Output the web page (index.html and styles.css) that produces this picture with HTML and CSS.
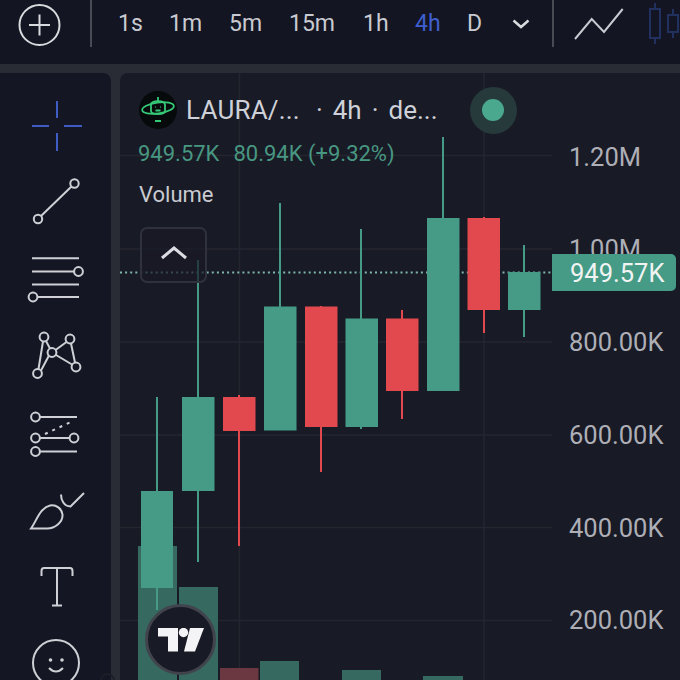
FILE: index.html
```html
<!DOCTYPE html>
<html lang="en">
<head>
    <meta charset="UTF-8">
    <meta name="viewport" content="width=device-width, initial-scale=1.0">
    <title>LAURA chart</title>
    <link rel="stylesheet" href="styles.css">
</head>
<body>
    <div class="app">
        <!-- Top toolbar -->
        <header class="topbar">
            <svg class="add-icon" width="90" height="50" viewBox="0 0 90 50">
                <circle cx="39.5" cy="25" r="20"/>
                <path d="M29 25H50M39.5 14.5V35.5"/>
            </svg>
            <div class="divider"></div>
            <nav class="intervals">
                <span class="interval w-1s">1s</span>
                <span class="interval w-1m">1m</span>
                <span class="interval w-5m">5m</span>
                <span class="interval w-15m">15m</span>
                <span class="interval w-1h">1h</span>
                <span class="interval w-4h active">4h</span>
                <span class="interval w-d">D</span>
                <svg class="chevron-down" width="18" height="10" viewBox="0 0 18 10"><path d="M1.5 1.5L9 8L16.5 1.5"/></svg>
            </nav>
            <div class="divider"></div>
            <svg class="chart-type" width="127" height="50" viewBox="553 0 127 50">
                <path class="line-type" d="M575 39L591.7 19L604 32L622.7 9"/>
                <path class="candle-type" d="M650 9H660V38H650ZM655 3V9M655 38V44M668 15H678V32H668ZM673 9V15M673 32V38"/>
            </svg>
        </header>

        <div class="main">
            <!-- Drawing tools -->
            <aside class="sidebar">
                <svg class="tool crosshair" viewBox="0 88 111 76">
                    <path d="M57 101V118M57 133V151M32 126H49M64 126H82"/>
                </svg>
                <svg class="tool" viewBox="0 164 111 76">
                    <circle cx="74.5" cy="183.5" r="4.2"/>
                    <circle cx="38" cy="219" r="4.2"/>
                    <path d="M71.5 186.5L41 216"/>
                </svg>
                <svg class="tool" viewBox="0 240 111 76">
                    <path d="M32 258.3H79M32 271.5H74M32 284.5H79M37.5 297H79"/>
                    <circle cx="78.5" cy="271.5" r="4.4"/>
                    <circle cx="33" cy="297" r="4.4"/>
                </svg>
                <svg class="tool" viewBox="0 316 111 76">
                    <path d="M43 341.5L38.5 369M46 341L50 348.5M41 370.5L49 355.5M55.5 350L66.5 342M56 355L72 364.5M71 343.5L75 362.5"/>
                    <circle cx="44" cy="337" r="4.4"/>
                    <circle cx="70" cy="339" r="4.4"/>
                    <circle cx="52" cy="352.5" r="4.4"/>
                    <circle cx="76" cy="367" r="4.4"/>
                    <circle cx="37.5" cy="373.5" r="4.4"/>
                </svg>
                <svg class="tool" viewBox="0 392 111 76">
                    <path d="M40 417H77M40 438H69.500M40 451.500H77"/>
                    <path class="dots" d="M45 434L74 420.500"/>
                    <circle cx="35.500" cy="417" r="4.400"/>
                    <circle cx="35.500" cy="438" r="4.400"/>
                    <circle cx="74" cy="438" r="4.400"/>
                    <circle cx="35.500" cy="451.500" r="4.400"/>
                </svg>
                <svg class="tool" viewBox="0 468 111 76">
                    <path d="M31 528.500C37 520 40 508 50 505.500C56 504 62 509 62.500 514.500C63 522 55 529 46 528.500Z"/>
                    <path d="M61 494.500C61 500 64 506.500 70.500 506.500L84 493"/>
                </svg>
                <svg class="tool" viewBox="0 544 111 76">
                    <path d="M41.500 576V571C41.500 569 42.500 568 44 568H70C71.500 568 72.500 569 72.500 571V576M57 568V605M52 605.500H62"/>
                </svg>
                <svg class="tool" viewBox="0 620 111 76">
                    <circle cx="56" cy="663" r="23"/>
                    <path d="M49 668Q56 675 63 668"/>
                    <circle class="eye" cx="50.500" cy="660" r="1.800"/>
                    <circle class="eye" cx="62" cy="660" r="1.800"/>
                </svg>
            </aside>

            <section class="chart">
                <!-- Grid, candles and volume, drawn in page coordinates -->
                <svg class="plot" width="560" height="607" viewBox="120 73 560 607">
                    <g class="grid">
                        <path d="M120 155.500H552M120 249H552M120 342H552M120 435H552M120 527.500H552M120 620.500H552"/>
                        <path d="M239.500 73V680M484 73V680"/>
                    </g>
                    <g class="vol-up">
                        <rect x="138" y="546" width="39" height="134"/>
                        <rect x="179" y="587" width="39" height="93"/>
                        <rect x="260" y="661" width="39" height="19"/>
                        <rect x="342" y="670" width="39" height="10"/>
                        <rect x="423" y="676" width="40" height="4"/>
                    </g>
                    <g class="vol-down">
                        <rect x="220" y="668" width="38.500" height="12"/>
                    </g>
                    <path class="last-line" d="M120 272.500H552"/>
                    <g class="up">
                        <path d="M157 397V610M198 260V562M280 203V307M361 229V429M443 137V218M524 245V337"/>
                        <rect x="141" y="491" width="32" height="97"/>
                        <rect x="182" y="397" width="32.500" height="94"/>
                        <rect x="264" y="306.500" width="32.500" height="124"/>
                        <rect x="345.500" y="318.500" width="32.500" height="108.500"/>
                        <rect x="427" y="218" width="32.500" height="173"/>
                        <rect x="508" y="272" width="32.500" height="38"/>
                    </g>
                    <g class="down">
                        <path d="M239 395V546M321 306V472M402 310V419M484 217V333"/>
                        <rect x="223" y="397" width="32.500" height="34"/>
                        <rect x="305" y="306.500" width="32.500" height="120.500"/>
                        <rect x="386" y="318.500" width="32.500" height="72.500"/>
                        <rect x="467.500" y="218" width="32.500" height="92"/>
                    </g>
                </svg>

                <div class="legend">
                    <div class="title-row">
                        <svg class="coin" width="38" height="38" viewBox="0 0 38 38">
                            <circle class="coin-bg" cx="19" cy="19" r="19"/>
                            <g class="coin-art">
                                <ellipse cx="19" cy="17" rx="16" ry="5.500" transform="rotate(-8 19 17)"/>
                                <path d="M12 14C12 9 26 9 26 14V20C26 24 12 24 12 20Z"/>
                                <path d="M19 10V6M16 30H22"/>
                                <path d="M16 16H16.500M21.500 16H22M16.500 19.500H21.500"/>
                            </g>
                        </svg>
                        <span class="symbol">LAURA/...</span>
                        <span>·</span>
                        <span>4h</span>
                        <span>·</span>
                        <span>de...</span>
                        <div class="status"><div class="status-dot"></div></div>
                    </div>
                    <div class="values">
                        <span>949.57K</span>
                        <span>80.94K (+9.32%)</span>
                    </div>
                    <div class="study">Volume</div>
                    <div class="collapse">
                        <svg width="28" height="14" viewBox="0 0 28 14"><path d="M2 12L14 2L26 12"/></svg>
                    </div>
                </div>

                <div class="axis">
                    <span>1.20M</span>
                    <span>1.00M</span>
                    <span>800.00K</span>
                    <span>600.00K</span>
                    <span>400.00K</span>
                    <span>200.00K</span>
                </div>
                <div class="last-price">949.57K</div>

                <div class="tv-badge">
                    <svg width="46" height="24" viewBox="0 0 46 24">
                        <path d="M0 0H20V23.500H10V8.500H0Z"/>
                        <circle cx="25.500" cy="4.500" r="4.700"/>
                        <path d="M32 0H46L37 23.500H26Z"/>
                    </svg>
                </div>
            </section>
        </div>
        <div class="corner-ring"></div>
    </div>
</body>
</html>
```

FILE: styles.css
```css
* {
    box-sizing: border-box;
}

body {
    margin: 0;
    background: #2a2c35;
    font-family: Roboto, "Liberation Sans", sans-serif;
    overflow: hidden;
}

.app {
    position: relative;
    width: 680px;
    height: 680px;
    display: flex;
    flex-direction: column;
    overflow: hidden;
    background: #2a2c35;
}

/* Top toolbar */
.topbar {
    display: flex;
    align-items: flex-start;
    height: 64px;
    flex-shrink: 0;
    background: #131522;
    margin-bottom: 9px;
}

.add-icon {
    flex-shrink: 0;
}

.add-icon circle,
.add-icon path {
    fill: none;
    stroke: #d9dade;
    stroke-width: 2;
}

.divider {
    width: 2px;
    height: 47px;
    flex-shrink: 0;
    background: #484a54;
}

.intervals {
    display: flex;
    align-items: center;
    height: 47px;
    width: 460px;
    padding-left: 26px;
    font-size: 23px;
    color: #c9cad1;
}

.interval {
    flex-shrink: 0;
}

.w-1s { width: 51px; }
.w-1m { width: 60px; }
.w-5m { width: 60px; }
.w-15m { width: 74px; }
.w-1h { width: 52px; }
.w-4h { width: 52px; }
.w-d { width: 45px; }

.interval.active {
    color: #3f5fd0;
}

.chevron-down path {
    fill: none;
    stroke: #d9dade;
    stroke-width: 2.500;
}

.chart-type {
    flex-shrink: 0;
    margin-left: -1px;
}

.line-type {
    fill: none;
    stroke: #c9cad1;
    stroke-width: 2;
}

.candle-type {
    fill: none;
    stroke: #22305f;
    stroke-width: 2;
}

.main {
    flex: 1;
    display: flex;
    gap: 9px;
    min-height: 0;
}

/* Left tools */
.sidebar {
    width: 111px;
    flex-shrink: 0;
    padding-top: 15px;
    background: #141723;
    border-radius: 0 8px 0 0;
}

.tool {
    display: block;
    width: 111px;
    height: 76px;
    overflow: visible;
    fill: none;
    stroke: #cfd0d6;
    stroke-width: 2;
}

.tool .dots {
    stroke-dasharray: 3 5;
}

.tool .eye {
    fill: #cfd0d6;
    stroke: none;
}

.crosshair {
    stroke: #3f5cc4;
}

/* Chart panel */
.chart {
    position: relative;
    flex: 1;
    background: #181a25;
    border-radius: 8px 0 0 0;
    overflow: hidden;
}

.plot {
    position: absolute;
    top: 0;
    left: 0;
}

.grid path {
    fill: none;
    stroke: #24262f;
    stroke-width: 1.500;
}

.vol-up rect {
    fill: #36695f;
}

.vol-down rect {
    fill: #6b3841;
}

.last-line {
    fill: none;
    stroke: #7fb8aa;
    stroke-width: 2;
    stroke-dasharray: 2 3.100;
}

.up path {
    fill: none;
    stroke: #459b85;
    stroke-width: 2;
}

.up rect {
    fill: #459b85;
}

.down path {
    fill: none;
    stroke: #e2494f;
    stroke-width: 2;
}

.down rect {
    fill: #e2494f;
}

.legend {
    position: absolute;
    top: 0;
    left: 19px;
    display: flex;
    flex-direction: column;
    align-items: flex-start;
}

.title-row {
    display: flex;
    align-items: center;
    height: 47px;
    margin-top: 13.500px;
    gap: 10px;
    font-size: 26px;
    color: #cfd1d8;
}

.coin {
    flex-shrink: 0;
    margin-right: -1px;
}

.coin-bg {
    fill: #060a0b;
}

.coin-art {
    fill: none;
    stroke: #35c877;
    stroke-width: 1.800;
}

.symbol {
    margin-right: 6px;
    letter-spacing: 0.2px;
}

.status {
    display: flex;
    align-items: center;
    justify-content: center;
    width: 47px;
    height: 47px;
    margin-left: 22px;
    border-radius: 50%;
    background: #263a3b;
}

.status-dot {
    width: 22px;
    height: 22px;
    border-radius: 50%;
    background: #4aa88e;
}

.values {
    display: flex;
    gap: 14px;
    margin-top: 7.500px;
    margin-left: -1px;
    font-size: 22px;
    color: #489782;
}

.study {
    margin-top: 16px;
    font-size: 22px;
    color: #c9cad1;
}

.collapse {
    display: flex;
    align-items: center;
    justify-content: center;
    width: 67px;
    height: 56px;
    margin-top: 20px;
    margin-left: 1px;
    padding-bottom: 4px;
    border: 2px solid #2f313b;
    border-radius: 7px;
    background: rgba(24, 26, 37, 0.7);
}

.collapse path {
    fill: none;
    stroke: #dcdde2;
    stroke-width: 3;
}

/* Price axis */
.axis {
    position: absolute;
    top: 37.500px;
    left: 449px;
    display: flex;
    flex-direction: column;
    font-size: 25.500px;
    color: #aeafb6;
}

.axis span {
    height: 92.800px;
    line-height: 92.800px;
}

.last-price {
    position: absolute;
    top: 181px;
    left: 432px;
    width: 124px;
    height: 37px;
    padding-left: 18px;
    line-height: 38px;
    font-size: 25.500px;
    color: #f1f3f3;
    background: #459b85;
    border-radius: 0 5px 5px 0;
}

.tv-badge {
    position: absolute;
    left: 25px;
    top: 531px;
    display: flex;
    align-items: center;
    justify-content: center;
    width: 71px;
    height: 71px;
    border: 3px solid #42444d;
    border-radius: 50%;
    background: #181a25;
}

.tv-badge svg {
    fill: #f4f4f6;
}

.corner-ring {
    position: absolute;
    left: 100px;
    top: 673px;
    width: 15px;
    height: 15px;
    border: 2px solid #1c1e28;
    border-radius: 50%;
}
```
